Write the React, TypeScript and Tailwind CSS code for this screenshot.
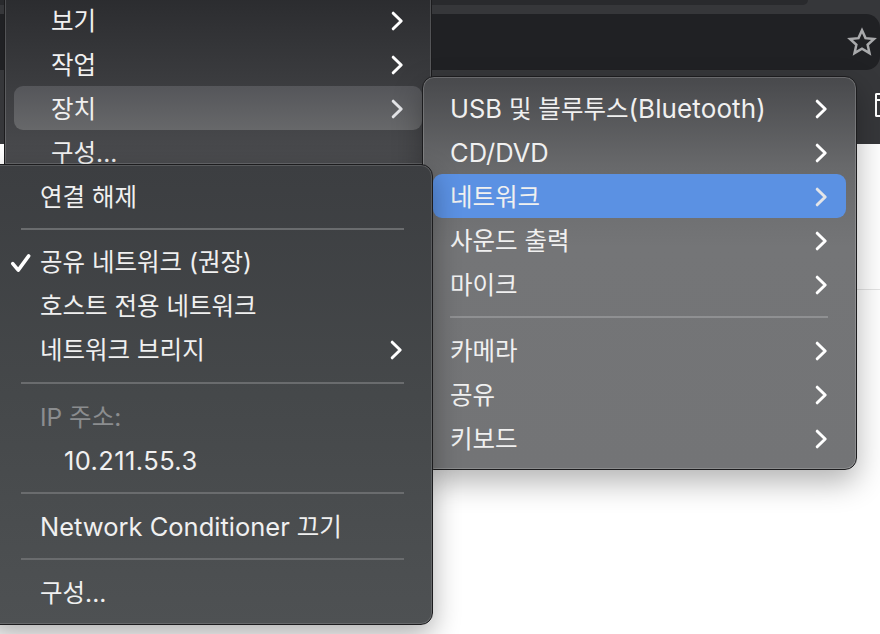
import type { ReactNode } from "react";

const font = "font-['Inter','Noto_Sans_CJK_KR',sans-serif]";

function Chevron({ dim }: { dim?: boolean }) {
  return (
    <svg width="13" height="20" viewBox="0 0 13 20" className="mt-[2px] shrink-0">
      <path
        d="M2.2 2.2 L10.2 10 L2.2 17.8"
        fill="none"
        stroke={dim ? "#e4e5e8" : "#ffffff"}
        strokeWidth="3"
        strokeLinecap="round"
        strokeLinejoin="round"
      />
    </svg>
  );
}

// latin runs sit a little larger than the hangul around them
function En({ children }: { children: ReactNode }) {
  return <span className="text-[25.5px]">{children}</span>;
}

function Row({
  label,
  arrow,
  active,
  checked,
  muted,
  indent,
  wide,
}: {
  label: ReactNode;
  arrow?: boolean;
  active?: "gray" | "blue";
  checked?: boolean;
  muted?: boolean;
  indent?: boolean;
  wide?: boolean;
}) {
  const bg =
    active === "gray"
      ? "bg-gradient-to-b from-[#55565a] to-[#67686a] rounded-[9px]"
      : active === "blue"
        ? "bg-[#5b91e3] rounded-[9px]"
        : "";
  return (
    <div className={`relative flex h-[44px] items-center justify-between pr-[18px] ${wide ? "pl-[37px]" : "pl-[17px]"} ${bg}`}>
      {checked && (
        <svg width="22" height="22" viewBox="0 0 20 20" className="absolute top-[13px] left-[-13px]">
          <path
            d="M2.5 10.5 L7.5 16.5 L17 3.5"
            fill="none"
            stroke="#ffffff"
            strokeWidth="3.2"
            strokeLinecap="round"
            strokeLinejoin="round"
          />
        </svg>
      )}
      <span
        className={`pt-[2px] text-[24.5px] leading-none whitespace-nowrap ${indent ? "pl-[24px]" : ""} ${
          muted ? "text-[#8b8d8f]" : "text-[#f0f0f0]"
        }`}
      >
        {label}
      </span>
      {arrow && <Chevron dim={active !== undefined} />}
    </div>
  );
}

function Divider({ className }: { className: string }) {
  return <div className={`h-[2px] bg-[#6a6c6e] ${className}`} />;
}

export default function App() {
  return (
    <div className={`relative h-[634px] w-[880px] overflow-hidden bg-white ${font}`}>
      {/* browser chrome behind the menus */}
      <div className="h-[144px] bg-[#36373a]">
        <div className="h-[5px] w-[808px] rounded-br-[10px] bg-[#292a2d]" />
        <div className="mt-[9px] flex h-[56px] items-center justify-end rounded-r-[14px] bg-[#202124] pr-[3px]">
          <svg width="30" height="30" viewBox="0 0 24 24">
            <path
              d="M12 2.6 L14.8 8.9 L21.6 9.6 L16.5 14.2 L18 20.9 L12 17.4 L6 20.9 L7.5 14.2 L2.4 9.6 L9.2 8.9 Z"
              fill="none"
              stroke="#a9aaac"
              strokeWidth="2"
              strokeLinejoin="miter"
            />
          </svg>
        </div>
        <div className="mt-[23px] ml-auto h-[24px] w-[5px] rounded-l-[2px] border-y-2 border-l-2 border-white pt-[4px]">
          <div className="h-[2px] bg-white" />
        </div>
      </div>
      <div className="absolute top-[289px] right-0 h-px w-[30px] bg-[#e4e4e4]" />

      {/* back menu */}
      <div className="absolute top-[-4px] left-[4px] h-[169px] w-[428px] overflow-hidden border border-[#1c1c1e] bg-gradient-to-b from-[#2b2c2f] to-[#4b4c4f] px-[9px] pt-[1px] shadow-[inset_0_0_0_1px_rgba(255,255,255,0.16)]">
        <Row label="보기" arrow wide />
        <Row label="작업" arrow wide />
        <Row label="장치" arrow wide active="gray" />
        <Row label="구성..." wide />
      </div>

      {/* device submenu */}
      <div className="absolute top-[76px] left-[422px] w-[435px] rounded-[12px] border border-[#1c1c1e] bg-[linear-gradient(180deg,#48494c_0px,#68696b_90px,#747577_170px,#737476_394px)] px-[10px] pt-[9px] pb-[9px] shadow-[inset_0_0_0_1px_rgba(255,255,255,0.18),0_12px_30px_rgba(0,0,0,0.3)]">
        <Row label={<><En>USB</En> 및 블루투스<span className="text-[26px] tracking-[0.1px]">(Bluetooth)</span></>} arrow />
        <Row label={<En>CD/DVD</En>} arrow />
        <Row label="네트워크" arrow active="blue" />
        <Row label="사운드 출력" arrow />
        <Row label="마이크" arrow />
        <Divider className="my-[10px] mr-[18px] ml-[17px] bg-[#8f9092]" />
        <Row label="카메라" arrow />
        <Row label="공유" arrow />
        <Row label="키보드" arrow />
      </div>

      {/* network submenu */}
      <div className="absolute top-[164px] left-[-14px] w-[447px] rounded-[12px] border border-[#1c1c1e] bg-gradient-to-b from-[#3c3e41] via-[#45484a] to-[#4e5153] pt-[9px] pr-[11px] pb-[10px] pl-[36px] shadow-[inset_0_0_0_1px_rgba(255,255,255,0.14),0_10px_28px_rgba(0,0,0,0.32)]">
        <Row label="연결 해제" />
        <Divider className="mt-[10px] mr-[17px] mb-[9px] ml-[-2px]" />
        <Row label="공유 네트워크 (권장)" checked />
        <Row label="호스트 전용 네트워크" />
        <Row label="네트워크 브리지" arrow />
        <Divider className="mt-[11px] mr-[17px] mb-[10px] ml-[-2px]" />
        <Row label="IP 주소:" muted />
        <Row label={<span className="text-[25.5px] tracking-[0.4px]">10.211.55.3</span>} indent />
        <Divider className="my-[10px] mr-[17px] ml-[-2px]" />
        <Row label={<><En>Network Conditioner</En> 끄기</>} />
        <Divider className="my-[10px] mr-[17px] ml-[-2px]" />
        <Row label="구성..." />
      </div>
    </div>
  );
}
